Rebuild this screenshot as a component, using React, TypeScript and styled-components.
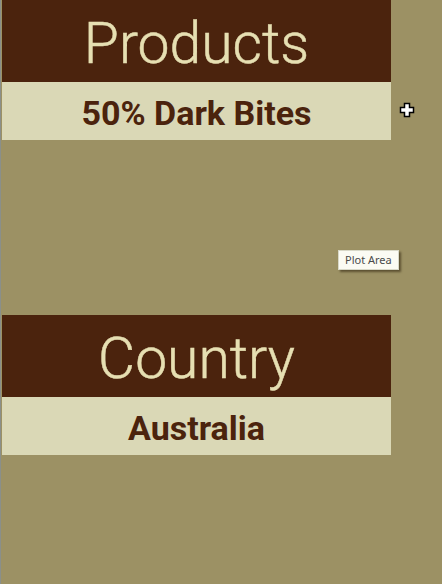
import React from "react";
import styled, { createGlobalStyle } from "styled-components";

const Global = createGlobalStyle`
  html, body { margin: 0; padding: 0; }
  body { background: #9c9164; width: 442px; height: 584px; overflow: hidden; }
`;

const Page = styled.div`
  position: relative;
  width: 442px;
  height: 584px;
  padding: 0 0 0 1px;
  box-sizing: border-box;
  display: flex;
  flex-direction: column;
  gap: 175px;
  background: #9c9164;
  border-left: 1px solid #8a8f8a;
`;

const Card = styled.div`
  width: 389px;
  display: flex;
  flex-direction: column;
`;

const Header = styled.div`
  height: 82px;
  box-sizing: border-box;
  padding-top: 4px;
  background: #4b230d;
  color: #e6dfb2;
  display: flex;
  align-items: center;
  justify-content: center;
  font-family: Roboto, "Liberation Sans", sans-serif;
  font-weight: 300;
  font-size: 57px;
  -webkit-text-stroke: 0.5px #e6dfb2;
  line-height: 1;
`;

const Value = styled.div`
  height: 58px;
  box-sizing: border-box;
  padding-top: 3px;
  background: #dad8b6;
  color: #4b230d;
  display: flex;
  align-items: center;
  justify-content: center;
  font-family: Roboto, "Liberation Sans", sans-serif;
  font-weight: 700;
  font-size: 34px;
  line-height: 1;
`;

const Tip = styled.div`
  position: absolute;
  left: 337px;
  top: 250px;
  padding: 2px 6px 3px 6px;
  background: #fbfbf3;
  color: #4a4a4a;
  font-family: "Noto Sans", "DejaVu Sans", sans-serif;
  font-size: 11px;
  line-height: 13px;
  border: 1px solid #d8d8c8;
  box-shadow: 2px 2px 2px rgba(40, 30, 10, 0.55);
`;

const Cursor = styled.svg`
  position: absolute;
  left: 398px;
  top: 102px;
`;

export default function App() {
  return (
    <>
      <Global />
      <Page>
        <Card>
          <Header>Products</Header>
          <Value>50% Dark Bites</Value>
        </Card>
        <Card>
          <Header>Country</Header>
          <Value>Australia</Value>
        </Card>
        <Tip>Plot Area</Tip>
        <Cursor width="16" height="16" viewBox="0 0 16 16">
          <path
            d="M5.5 1.5h5v4h4v5h-4v4h-5v-4h-4v-5h4z"
            fill="#fff"
            stroke="#000"
            strokeWidth="1.5"
          />
        </Cursor>
      </Page>
    </>
  );
}
